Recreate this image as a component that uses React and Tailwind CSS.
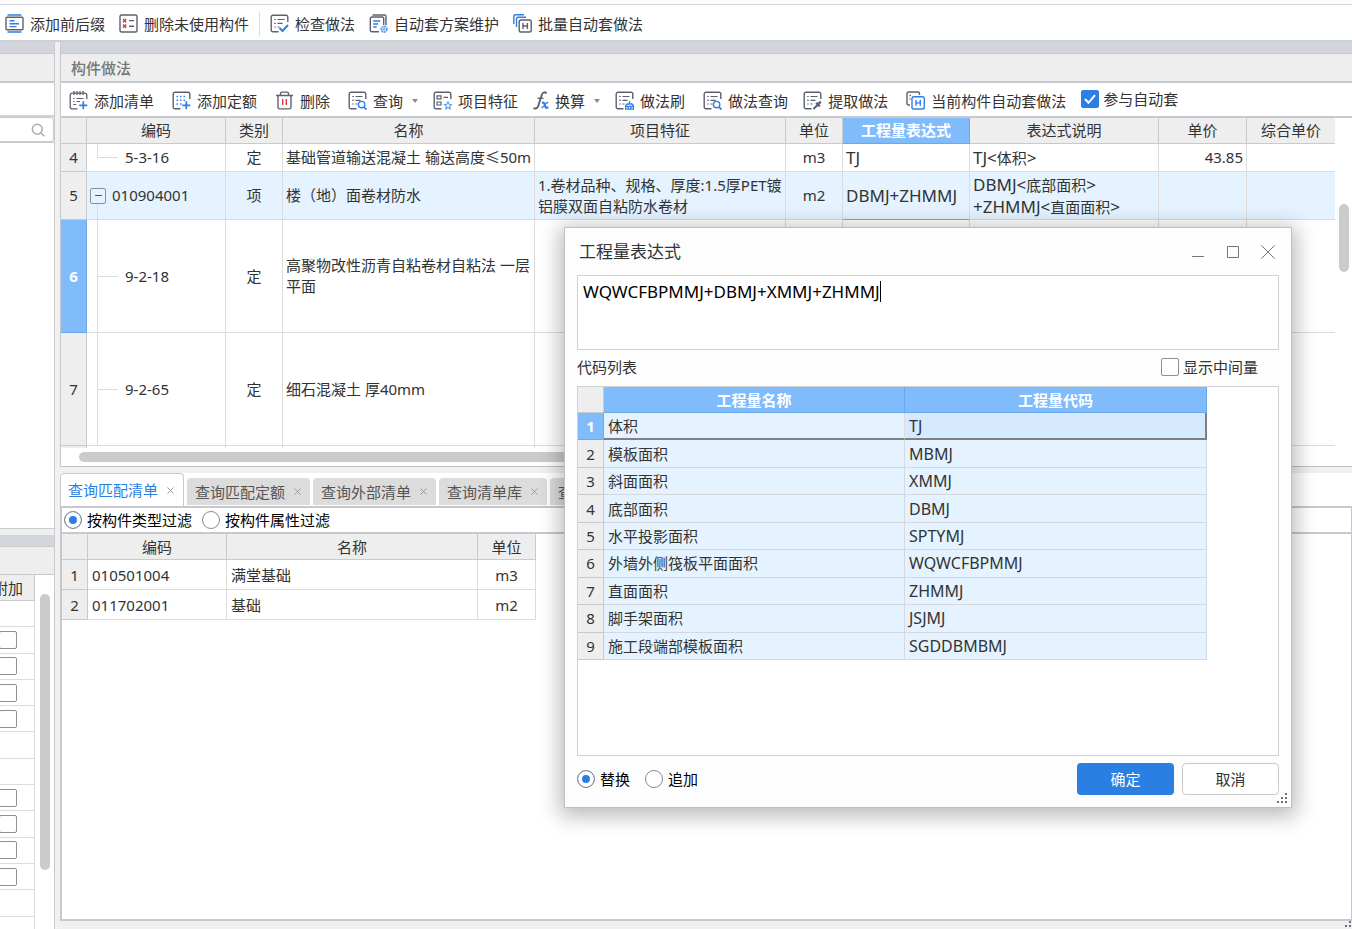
import React, { useState } from 'react'
import clsx from 'clsx'

const FONT = "font-['Noto_Sans','Noto_Sans_CJK_SC',sans-serif]"

/* ---------- icons ---------- */

function Svg({ children, className = 'w-[19px] h-[19px]', box = '0 0 19 19' }) {
  return (
    <svg viewBox={box} className={clsx('shrink-0', className)} fill="none" stroke="#5c6170" strokeWidth="1.4" aria-hidden="true">
      {children}
    </svg>
  )
}

const B = '#2f7fe6'

const Sheet = () => <path d="M8.5 17.8H3a1.8 1.8 0 0 1-1.8-1.8V3A1.8 1.8 0 0 1 3 1.2h13A1.8 1.8 0 0 1 17.8 3v5" />
const Lines = () => <path d="M4.2 5.5h1.5M7.5 5.5h7M4.2 9.3h1.5M7.5 9.3h5M4.2 13h1.5M7.5 13h2" strokeWidth="1.2" />

const PrefixIcon = () => (
  <Svg>
    <rect x="1" y="3.2" width="17" height="12.6" rx="1" />
    <path d="M2.5 1h14M2.5 18h14M4.5 6.8h5M4.5 9.7h9.5M4.5 12.6h7" stroke={B} />
  </Svg>
)
const UnusedIcon = () => (
  <Svg>
    <rect x="1" y="1" width="17" height="17" rx="1.5" />
    <path d="M4 5l3.2 3.2M7.2 5L4 8.2M4 10.5l3.2 3.2M7.2 10.5L4 13.7" stroke="#e0313c" />
    <path d="M10 6.6h5M10 12.2h5" />
  </Svg>
)
const CheckIcon = () => (
  <Svg>
    <Sheet />
    <Lines />
    <path d="M9.5 14l3 3 5.5-6" stroke={B} strokeWidth="2" />
  </Svg>
)
const PlanIcon = () => (
  <Svg>
    <path d="M10 17.8H2.8a1.5 1.5 0 0 1-1.5-1.5V4.5A1.5 1.5 0 0 1 2.8 3h10.4a1.5 1.5 0 0 1 1.5 1.5V11M3.5 1h12a1.5 1.5 0 0 1 1.5 1.5V11" />
    <path d="M4.2 7h7M4.2 10h5M4.2 13h3.5" stroke={B} />
    <circle cx="15" cy="15.2" r="2.8" stroke="#5b9cf0" strokeWidth="1.8" strokeDasharray="2 .6" />
    <circle cx="15" cy="15.2" r="1" stroke="#5b9cf0" strokeWidth="1" />
  </Svg>
)
const BatchIcon = () => (
  <Svg>
    <path d="M.8 10V2.2A1.4 1.4 0 0 1 2.2.8H11M3.5 13V4.7a1.4 1.4 0 0 1 1.4-1.4H13" stroke={B} />
    <rect x="6.2" y="6" width="12" height="12" rx="1.8" />
    <path d="M10 9v6M14.4 9v6M10 12h4.4" />
  </Svg>
)
const AddListIcon = () => (
  <Svg>
    <path d="M8.5 17.8H3A1.8 1.8 0 0 1 1.2 16V4A1.8 1.8 0 0 1 3 2.2h13A1.8 1.8 0 0 1 17.8 4v4M5 0v4M8 0v4M11 0v4M14 0v4" strokeWidth="1.3" />
    <path d="M4.2 7.5h1.5M7.5 7.5h7M4.2 10.5h1.5M7.5 10.5h3.5M4.2 13.5h3" strokeWidth="1.2" />
    <path d="M14.3 10.3v8M10.3 14.3h8" stroke={B} strokeWidth="1.7" />
  </Svg>
)
const AddQuotaIcon = () => (
  <Svg>
    <Sheet />
    <path d="M4.5 5.5h10M4.5 9.3h10M4.5 13h5" stroke={B} strokeWidth="1.5" strokeDasharray="1.5 2" />
    <path d="M14.3 10.3v8M10.3 14.3h8" stroke={B} strokeWidth="1.7" />
  </Svg>
)
const TrashIcon = () => (
  <Svg>
    <path d="M1 4.5h17M5.5 4.3V2.5A1.4 1.4 0 0 1 6.9 1.1h5.2a1.4 1.4 0 0 1 1.4 1.4v1.8M3 4.5v11.8a1.6 1.6 0 0 0 1.6 1.6h9.8a1.6 1.6 0 0 0 1.6-1.6V4.5" />
    <path d="M7.7 8v6M11.3 8v6" stroke="#e0313c" />
  </Svg>
)
const SearchSheetIcon = () => (
  <Svg>
    <Sheet />
    <Lines />
    <circle cx="13.6" cy="13.6" r="3.2" stroke={B} />
    <path d="M16 16l2.5 2.6" stroke={B} strokeWidth="1.8" />
  </Svg>
)
const FeatureIcon = () => (
  <Svg>
    <Sheet />
    <path d="M4 4.8h4v3H4zM4 11h4v3H4zM10.5 6.3h4.5" strokeWidth="1.2" />
    <path d="M15 10.8l1.1 2.4 2.5.3-1.9 1.7.5 2.6-2.2-1.3-2.2 1.3.5-2.6-1.9-1.7 2.5-.3z" stroke="#5b9cf0" strokeWidth="1.1" />
  </Svg>
)
const FxIcon = () => (
  <Svg className="w-[16px] h-[19px]" box="0 0 16 19">
    <path d="M13.4 2.6C12.600 .7 9.800 .8 8.700 4L5.300 14.800c-.8 2.600-3 3.400-4.900 2.200" strokeWidth="1.900" />
    <path d="M4.500 7.300h6" />
    <path d="M9 12c1.600-.9 2.300-.2 2.700 1.600.5 2.400 1.200 4.200 3.600 2.600" stroke={B} strokeWidth="2.200" />
    <path d="M15.300 11.700c-1.500-.6-2.500.6-3.500 2.300-.9 1.600-1.800 2.900-3.400 2.300" stroke={B} strokeWidth="1.400" />
  </Svg>
)
const BrushIcon = () => (
  <Svg>
    <Sheet />
    <Lines />
    <path d="M14.5 10v3M10.700 18.200v-3.700l1.500-1.500h4.700l1.500 1.500v3.700zM10.700 15.300h7.700M13.300 15v3M15.900 15v3" stroke={B} strokeWidth="1.3" />
  </Svg>
)
const ExtractIcon = () => (
  <Svg>
    <Sheet />
    <Lines />
    <path d="M10.5 18l4.5-4.5" strokeWidth="2" />
    <path d="M13.2 11.8l3.5 3.5M15.2 13.2l2.6-2.6" strokeWidth="2.4" />
  </Svg>
)
const CurrentIcon = () => (
  <Svg>
    <path d="M4 14H2.5A1.5 1.5 0 0 1 1 12.5v-10A1.5 1.5 0 0 1 2.5 1H12a1.5 1.5 0 0 1 1.5 1.5V4" />
    <path d="M3.5 4.5H5M3.5 8h1" />
    <rect x="6" y="5.7" width="12.3" height="12.3" rx="1.8" stroke={B} />
    <path d="M10 9v5.800M14.3 9v5.800M10 11.9h4.3" stroke={B} />
  </Svg>
)

const Grip = () => (
  <svg viewBox="0 0 11 11" className="w-[11px] h-[11px]" fill="#6b707c" aria-hidden="true">
    <path d="M8 0h2v2H8zM4 4h2v2H4zM8 4h2v2H8zM0 8h2v2H0zM4 8h2v2H4zM8 8h2v2H8z" />
  </svg>
)

/* ---------- small controls ---------- */

function ToolButton({ icon: Icon, label, menu, wide }) {
  return (
    <button type="button" className={clsx('flex items-center gap-[6px] shrink-0 whitespace-nowrap', wide && 'pr-[3px]')}>
      <Icon />
      <span>{label}</span>
      {menu && <span className="ml-[3px] border-x-[3px] border-t-4 border-x-transparent border-t-[#8c8c8c]" />}
    </button>
  )
}

function Check({ label, ...rest }) {
  return (
    <label className="flex items-center gap-[4px] whitespace-nowrap">
      <span className="grid shrink-0">
        <input
          type="checkbox"
          aria-label={label ? undefined : '附加'}
          className="peer col-start-1 row-start-1 appearance-none w-[18px] h-[18px] rounded-[2px] border border-[#8f8f8f] bg-white checked:bg-[#2b7fe3] checked:border-[#2b7fe3]"
          {...rest}
        />
        <svg viewBox="0 0 18 18" className="col-start-1 row-start-1 w-[18px] h-[18px] pointer-events-none invisible peer-checked:visible" fill="none" stroke="#fff" strokeWidth="2" aria-hidden="true">
          <path d="M4 9l3.5 3.8L14 5.2" />
        </svg>
      </span>
      {label}
    </label>
  )
}

function Radio({ label, ...rest }) {
  return (
    <label className="flex items-center gap-[5px] whitespace-nowrap text-black">
      <input
        type="radio"
        className="appearance-none w-[18px] h-[18px] shrink-0 rounded-full border border-[#8a8a8a] bg-white checked:bg-[#2b7fe3] checked:shadow-[inset_0_0_0_4px_#fff]"
        {...rest}
      />
      {label}
    </label>
  )
}

/* ---------- data ---------- */

const topTools = [
  { icon: PrefixIcon, label: '添加前后缀' },
  { icon: UnusedIcon, label: '删除未使用构件' },
  { icon: CheckIcon, label: '检查做法' },
  { icon: PlanIcon, label: '自动套方案维护' },
  { icon: BatchIcon, label: '批量自动套做法' },
]

const methodTools = [
  { icon: AddListIcon, label: '添加清单', wide: true },
  { icon: AddQuotaIcon, label: '添加定额', wide: true },
  { icon: TrashIcon, label: '删除', wide: true },
  { icon: SearchSheetIcon, label: '查询', menu: true },
  { icon: FeatureIcon, label: '项目特征' },
  { icon: FxIcon, label: '换算', menu: true },
  { icon: BrushIcon, label: '做法刷', wide: true },
  { icon: SearchSheetIcon, label: '做法查询' },
  { icon: ExtractIcon, label: '提取做法', wide: true },
  { icon: CurrentIcon, label: '当前构件自动套做法' },
]

const rows = [
  { n: 4, h: 'h-[28px]', code: '5-3-16', kind: '定', name: '基础管道输送混凝土 输送高度≤50m', unit: 'm3', expr: 'TJ', desc: [['TJ', '体积']], price: '43.85', last: true },
  { n: 5, h: 'h-[48px]', code: '010904001', kind: '项', name: '楼（地）面卷材防水', feature: '1.卷材品种、规格、厚度:1.5厚PET镀\n铝膜双面自粘防水卷材', unit: 'm2', expr: 'DBMJ+ZHMMJ', desc: [['DBMJ', '底部面积'], ['+ZHMMJ', '直面面积']], parent: true },
  { n: 6, h: 'h-[113px]', code: '9-2-18', kind: '定', name: '高聚物改性沥青自粘卷材自粘法 一层\n平面', selected: true },
  { n: 7, h: 'h-[113px]', code: '9-2-65', kind: '定', name: '细石混凝土 厚40mm' },
]

const codes = [
  ['体积', 'TJ'],
  ['模板面积', 'MBMJ'],
  ['斜面面积', 'XMMJ'],
  ['底部面积', 'DBMJ'],
  ['水平投影面积', 'SPTYMJ'],
  ['外墙外侧筏板平面面积', 'WQWCFBPMMJ'],
  ['直面面积', 'ZHMMJ'],
  ['脚手架面积', 'JSJMJ'],
  ['施工段端部模板面积', 'SGDDBMBMJ'],
]

const tabs = ['查询匹配清单', '查询匹配定额', '查询外部清单', '查询清单库', '查询定额库']

// rows of the attribute list that carry a tick box
const attrRows = [false, true, true, true, true, false, false, true, true, true, true, false, false]

const TH = 'border-r border-b border-[#c8cacc] bg-[#eee] font-normal'
const TD = 'border-r border-b border-[#dcdcdc] px-[3px] whitespace-pre'

/* ---------- panels ---------- */

function SidePanel() {
  return (
    <aside className="w-[55px] shrink-0 flex flex-col border-r border-[#c8cacc] overflow-hidden">
      <div className="h-[12px] shrink-0 bg-[#d3d5dc] border-b border-[#c8cacc]" />
      <div className="h-[29px] shrink-0 bg-[#eee] border-b-2 border-[#c5c8cc]" />
      <div className="h-[34px] shrink-0 bg-white border-b-2 border-[#cfd2d6]" />
      <label className="h-[25px] shrink-0 flex items-center justify-end bg-white border border-l-0 border-[#c8cacc] rounded-r-[4px] pr-[8px]">
        <input type="search" aria-label="搜索" className="w-[24px] outline-none" />
        <svg viewBox="0 0 14 14" className="w-[14px] h-[14px]" fill="none" stroke="#aaa" strokeWidth="1.5" aria-hidden="true">
          <circle cx="6.3" cy="6.3" r="5" />
          <path d="M10 10l3.3 3.3" />
        </svg>
      </label>
      <div className="h-[387px] shrink-0 bg-white border-y border-[#c8cacc]" />
      <div className="h-[6px] shrink-0" />
      <div className="h-[12px] shrink-0 bg-[#d3d5dc] border-b border-[#c8cacc]" />
      <div className="h-[28px] shrink-0 bg-[#eee] border-b border-[#c5c8cc]" />
      <div className="flex-1 min-h-0 flex bg-white">
        <div className="w-[35px] flex justify-end overflow-hidden">
          <table className="w-[53px] h-[368px] shrink-0 border-separate border-spacing-0">
            <thead>
              <tr><th className={clsx(TH, 'h-[26px]')}>附加</th></tr>
            </thead>
            <tbody>
              {attrRows.map((tick, i) => (
                <tr key={i}>
                  <td className="border-r border-b border-[#dcdcdc] h-[26px]">
                    {tick && <div className="flex justify-center"><Check /></div>}
                  </td>
                </tr>
              ))}
            </tbody>
          </table>
        </div>
        <div className="ml-[5px] mt-[19px] w-[10px] h-[276px] rounded-full bg-[#cbcbcb]" />
      </div>
    </aside>
  )
}

function TreeCell({ row }) {
  return (
    <td className={clsx(TD, 'relative')}>
      {row.parent ? (
        <>
          <span className="absolute left-[10px] top-[32px] bottom-0 border-l border-[#dcdcdc]" />
          <div className="flex items-center gap-[6px]">
            <button type="button" aria-label="折叠" className="w-[16px] h-[16px] grid place-items-center border border-[#8f8f8f] rounded-[2px]">
              <span className="w-[7px] h-px bg-[#555]" />
            </button>
            {row.code}
          </div>
        </>
      ) : (
        <>
          <span className={clsx('absolute left-[10px] top-0 border-l border-[#dcdcdc]', row.last ? 'h-1/2' : 'bottom-0')} />
          <div className="flex items-center">
            <span className="ml-[7px] mr-[7px] w-[21px] border-t border-[#dcdcdc]" />
            {row.code}
          </div>
        </>
      )}
    </td>
  )
}

function MethodTable() {
  return (
    <table className="w-full table-fixed border-separate border-spacing-0 leading-[21px]">
      <colgroup>
        <col className="w-[26px]" />
        <col className="w-[139px]" />
        <col className="w-[57px]" />
        <col className="w-[252px]" />
        <col className="w-[251px]" />
        <col className="w-[57px]" />
        <col className="w-[127px]" />
        <col className="w-[189px]" />
        <col className="w-[88px]" />
        <col />
      </colgroup>
      <thead>
        <tr className="h-[26px]">
          <th className={TH} aria-label="序号" />
          <th className={TH}>编码</th>
          <th className={TH}>类别</th>
          <th className={TH}>名称</th>
          <th className={TH}>项目特征</th>
          <th className={TH}>单位</th>
          <th className="border-r border-b border-[#6aa9ee] bg-[#80bbfb] text-white font-bold">工程量表达式</th>
          <th className={TH}>表达式说明</th>
          <th className={TH}>单价</th>
          <th className="border-b border-[#c8cacc] bg-[#eee] font-normal">综合单价</th>
        </tr>
      </thead>
      <tbody>
        {rows.map(r => (
          <tr key={r.n} className={clsx(r.h, r.parent && 'bg-[#e4f3ff]')}>
            <th className={clsx('border-r border-b', r.selected ? 'bg-[#80bbfb] border-[#6aa9ee] text-white font-bold' : 'bg-[#eee] border-[#c8cacc] font-normal')}>{r.n}</th>
            <TreeCell row={r} />
            <td className={clsx(TD, 'text-center')}>{r.kind}</td>
            <td className={TD}>{r.name}</td>
            <td className={TD}>{r.feature}</td>
            <td className={clsx(TD, 'text-center')}>{r.unit}</td>
            <td className={clsx('px-[3px] border-r border-b border-r-[#dcdcdc] text-[17px]', r.parent ? 'border-b-[#6aa9ee]' : 'border-b-[#dcdcdc]')}>{r.expr}</td>
            <td className={TD}>
              {r.desc?.map(([code, name]) => (
                <div key={code}>
                  <span className="text-[17px]">{code}&lt;</span>{name}<span className="text-[17px]">&gt;</span>
                </div>
              ))}
            </td>
            <td className={clsx(TD, 'text-right')}>{r.price}</td>
            <td className="border-b border-[#dcdcdc]" />
          </tr>
        ))}
        <tr className="h-[28px]">
          <th className={TH} />
          {Array.from({ length: 8 }, (_, i) => <td key={i} className={TD} />)}
          <td />
        </tr>
      </tbody>
    </table>
  )
}

function QueryPane() {
  const [tab, setTab] = useState(tabs[0])
  const [filter, setFilter] = useState('type')
  return (
    <section className="flex-1 min-h-0 flex flex-col">
      <div role="tablist" className="h-[33px] shrink-0 flex items-end gap-[3px] bg-white overflow-hidden">
        {tabs.map(t => (
          <button
            key={t}
            type="button"
            role="tab"
            aria-selected={t === tab}
            onClick={() => setTab(t)}
            className={clsx(
              'shrink-0 flex items-center gap-[9px] pr-[9px] rounded-t-[4px]',
              t === tab ? 'h-[33px] pl-[7px] bg-white text-[#2b7fe3] border border-b-0 border-[#c8cacc]' : 'h-[27px] mb-px pl-[8px] bg-[#dcdcdc] text-[#555]'
            )}
          >
            {t}
            <svg viewBox="0 0 7 7" className="w-[7px] h-[7px]" stroke="#999" aria-hidden="true"><path d="M.5.5l6 6M6.5.5l-6 6" /></svg>
          </button>
        ))}
      </div>
      <div className="flex-1 min-h-0 flex flex-col bg-white border-2 border-r border-[#c6c8cd]">
        <div className="h-[26px] shrink-0 flex items-center gap-[10px] pl-[2px] border-b-2 border-[#c6c8cd]">
          <Radio label="按构件类型过滤" name="filter" checked={filter === 'type'} onChange={() => setFilter('type')} />
          <Radio label="按构件属性过滤" name="filter" checked={filter === 'attr'} onChange={() => setFilter('attr')} />
        </div>
        <table className="w-[474px] table-fixed border-separate border-spacing-0">
          <colgroup>
            <col className="w-[26px]" />
            <col className="w-[139px]" />
            <col className="w-[251px]" />
            <col className="w-[58px]" />
          </colgroup>
          <thead>
            <tr className="h-[26px]">
              <th className={TH} aria-label="序号" />
              <th className={TH}>编码</th>
              <th className={TH}>名称</th>
              <th className={TH}>单位</th>
            </tr>
          </thead>
          <tbody>
            {[['010501004', '满堂基础', 'm3'], ['011702001', '基础', 'm2']].map((r, i) => (
              <tr key={r[0]} className="h-[30px]">
                <th className={TH}>{i + 1}</th>
                <td className="border-r border-b border-[#dcdcdc] px-[4px]">{r[0]}</td>
                <td className="border-r border-b border-[#dcdcdc] px-[4px]">{r[1]}</td>
                <td className="border-r border-b border-[#dcdcdc] text-center">{r[2]}</td>
              </tr>
            ))}
          </tbody>
        </table>
      </div>
    </section>
  )
}

const windowButtons = [
  ['最小化', 'M1 11.5h12'],
  ['最大化', 'M1.5 1.5h11v11h-11z'],
  ['关闭', 'M.5.5l13 13M13.5.5l-13 13'],
]

function ExpressionDialog() {
  const [expr, setExpr] = useState('WQWCFBPMMJ+DBMJ+XMMJ+ZHMMJ')
  const [mode, setMode] = useState('replace')
  const headCell = 'border-r border-b border-[#6aa9ee] bg-[#80bbfb] text-white font-bold'
  return (
    <div role="dialog" aria-label="工程量表达式" className="absolute right-[60px] top-[227px] w-[728px] bg-[#fdfdfd] border border-[#bdbfc2] shadow-[0_4px_20px_4px_rgba(0,0,0,0.28)] px-[12px] pb-[12px]">
      <div className="h-[47px] flex items-center justify-between pr-[4px]">
        <h2 className="text-[17px] pl-[2px]">工程量表达式</h2>
        <div className="flex gap-[21px]">
          {windowButtons.map(([name, d]) => (
            <button key={name} type="button" aria-label={name}>
              <svg viewBox="0 0 14 14" className="w-[14px] h-[14px]" fill="none" stroke="#777" aria-hidden="true"><path d={d} /></svg>
            </button>
          ))}
        </div>
      </div>
      <div className="flex h-[75px] pl-[5px] pt-[5px] border border-[#cfd1d3] bg-white">
        <textarea
          aria-label="表达式"
          spellCheck={false}
          rows={1}
          value={expr}
          onChange={e => setExpr(e.target.value)}
          className="field-sizing-content h-[60px] resize-none outline-none caret-transparent text-[17px] leading-[21px] text-black"
        />
        <span className="w-px h-[21px] bg-black" />
      </div>
      <div className="h-[36px] flex items-center justify-between pr-[21px] pb-[2px]">
        <span>代码列表</span>
        <Check label="显示中间量" />
      </div>
      <div className="h-[370px] border border-[#cfd1d3] bg-white">
        <table className="w-[629px] h-[273px] table-fixed border-separate border-spacing-0">
          <colgroup>
            <col className="w-[26px]" />
            <col className="w-[301px]" />
            <col className="w-[302px]" />
          </colgroup>
          <thead>
            <tr className="h-[26px]">
              <th className={TH} aria-label="序号" />
              <th className={headCell}>工程量名称</th>
              <th className={headCell}>工程量代码</th>
            </tr>
          </thead>
          <tbody>
            {codes.map(([name, code], i) => (
              <tr key={code} className="h-[27px] bg-[#e4f3ff]">
                <th className={i === 0 ? headCell : TH}>{i + 1}</th>
                <td className={clsx('border-r px-[4px]', i === 0 ? 'border-r-[#dcdcdc] border-b-2 border-b-[#7d7f82]' : 'border-b border-[#d5d9dd]')}>{name}</td>
                <td className={clsx('px-[4px] text-[16px]', i === 0 ? 'bg-[#d5e9ff] border-r-2 border-b-2 border-[#7d7f82]' : 'border-r border-b border-[#d5d9dd]')}>{code}</td>
              </tr>
            ))}
          </tbody>
        </table>
      </div>
      <div className="mt-[7px] h-[32px] flex items-center gap-[15px]">
        <Radio label="替换" name="mode" checked={mode === 'replace'} onChange={() => setMode('replace')} />
        <Radio label="追加" name="mode" checked={mode === 'append'} onChange={() => setMode('append')} />
        <div className="ml-auto flex gap-[8px]">
          <button type="button" className="w-[97px] h-[32px] rounded-[4px] bg-[#2b7fe3] text-white">确定</button>
          <button type="button" className="w-[97px] h-[32px] rounded-[4px] bg-white border border-[#c8cacc]">取消</button>
        </div>
      </div>
      <div className="absolute right-[3px] bottom-[3px]"><Grip /></div>
    </div>
  )
}

export default function App() {
  const [auto, setAuto] = useState(true)
  return (
    <div className={clsx('relative h-screen flex flex-col overflow-hidden bg-[#f0f0f0] text-[15px] leading-[20px] text-[#333]', FONT)}>
      <div className="h-[5px] shrink-0 bg-[#fbfbfb] border-b border-[#d5d7da]" />
      <header className="h-[37px] shrink-0 flex items-center gap-[14px] pl-[5px] pt-[2px] bg-white border-b-2 border-[#cccfd3]">
        {topTools.slice(0, 2).map(t => <ToolButton key={t.label} {...t} />)}
        <span className="-mx-1 w-px h-[24px] bg-[#dcdcdc]" />
        {topTools.slice(2).map(t => <ToolButton key={t.label} {...t} />)}
      </header>

      <div className="flex-1 min-h-0 flex">
        <SidePanel />
        <main className="ml-[5px] flex-1 min-w-0 flex flex-col">
          <section className="shrink-0 border-l border-[#c6c8cd] bg-white">
            <div className="h-[12px] bg-[#d3d5dc] border-b border-[#c8cacc]" />
            <h1 className="h-[29px] flex items-center pl-[10px] bg-[#eee] border-b-2 border-[#c5c8cc] text-[#777] font-medium">构件做法</h1>
            <div className="h-[35px] flex items-center gap-[15px] pl-[8px] pt-[2px] border-b-2 border-[#c5c8cc]">
              {methodTools.map(t => <ToolButton key={t.label} {...t} />)}
              <div className="pb-[4px]">
                <Check label="参与自动套" checked={auto} onChange={e => setAuto(e.target.checked)} />
              </div>
            </div>
            <div className="h-[330px] flex overflow-hidden">
              <div className="flex-1 min-w-0"><MethodTable /></div>
              <div className="w-[17px] shrink-0 pl-[4px] pt-[86px]">
                <div className="w-[10px] h-[68px] rounded-full bg-[#cbcbcb]" />
              </div>
            </div>
            <div className="h-[19px] pt-[4px] pl-[18px] pr-[60px] border-b border-[#bfc1c4]">
              <div className="h-[10px] w-4/5 rounded-full bg-[#cbcbcb]" />
            </div>
          </section>
          <div className="h-[6px] shrink-0" />
          <QueryPane />
          <footer className="h-[8px] shrink-0 flex justify-end overflow-hidden"><Grip /></footer>
        </main>
      </div>

      <ExpressionDialog />
    </div>
  )
}
